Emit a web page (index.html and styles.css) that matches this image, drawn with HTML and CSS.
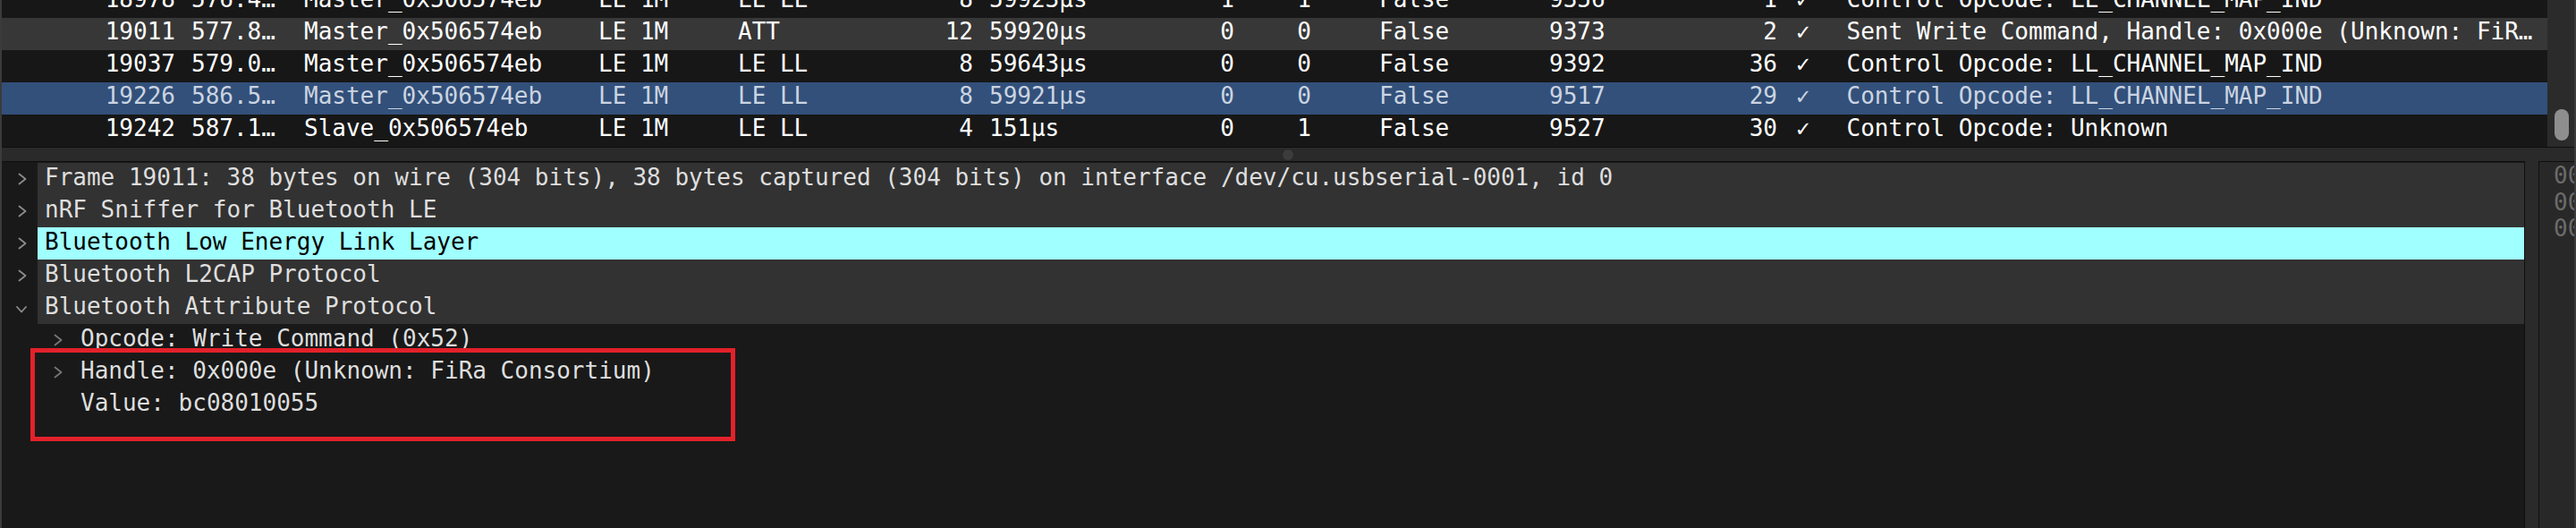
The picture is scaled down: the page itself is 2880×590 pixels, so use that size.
FILE: index.html
```html
<!DOCTYPE html>
<html lang="en">
<head>
<meta charset="utf-8">
<title>Wireshark – Packet 19011</title>
<link rel="stylesheet" href="styles.css">
</head>
<body>
<div class="window">
  <div class="packet-list">
    <div class="rows">
      <div class="rows-inner">
        <div class="row">
          <span class="r">18978</span><span class="c-time">576.4…</span><span>Master_0x506574eb</span><span>LE 1M</span><span>LE LL</span><span class="r">8</span><span class="c-delta">59923µs</span><span class="r">1</span><span class="r">1</span><span class="c-false">False</span><span>9356</span><span class="r">1</span><span class="c-chk">✓</span><span>Control Opcode: LL_CHANNEL_MAP_IND</span>
        </div>
        <div class="row row-marked">
          <span class="r">19011</span><span class="c-time">577.8…</span><span>Master_0x506574eb</span><span>LE 1M</span><span>ATT</span><span class="r">12</span><span class="c-delta">59920µs</span><span class="r">0</span><span class="r">0</span><span class="c-false">False</span><span>9373</span><span class="r">2</span><span class="c-chk">✓</span><span>Sent Write Command, Handle: 0x000e (Unknown: FiR…</span>
        </div>
        <div class="row">
          <span class="r">19037</span><span class="c-time">579.0…</span><span>Master_0x506574eb</span><span>LE 1M</span><span>LE LL</span><span class="r">8</span><span class="c-delta">59643µs</span><span class="r">0</span><span class="r">0</span><span class="c-false">False</span><span>9392</span><span class="r">36</span><span class="c-chk">✓</span><span>Control Opcode: LL_CHANNEL_MAP_IND</span>
        </div>
        <div class="row row-selected">
          <span class="r">19226</span><span class="c-time">586.5…</span><span>Master_0x506574eb</span><span>LE 1M</span><span>LE LL</span><span class="r">8</span><span class="c-delta">59921µs</span><span class="r">0</span><span class="r">0</span><span class="c-false">False</span><span>9517</span><span class="r">29</span><span class="c-chk">✓</span><span>Control Opcode: LL_CHANNEL_MAP_IND</span>
        </div>
        <div class="row">
          <span class="r">19242</span><span class="c-time">587.1…</span><span>Slave_0x506574eb</span><span>LE 1M</span><span>LE LL</span><span class="r">4</span><span class="c-delta">151µs</span><span class="r">0</span><span class="r">1</span><span class="c-false">False</span><span>9527</span><span class="r">30</span><span class="c-chk">✓</span><span>Control Opcode: Unknown</span>
        </div>
      </div>
    </div>
    <div class="vscroll"><div class="thumb"></div></div>
  </div>

  <div class="splitter"><span class="grip"></span></div>

  <div class="bottom">
    <div class="details">
      <div class="node node-top">
        <span class="tog"><svg class="chev" width="10" height="14" viewBox="0 0 10 14"><polyline points="1.5,1.5 8.5,7 1.5,12.5"/></svg></span>
        <span class="lbl">Frame 19011: 38 bytes on wire (304 bits), 38 bytes captured (304 bits) on interface /dev/cu.usbserial-0001, id 0</span>
      </div>
      <div class="node node-top">
        <span class="tog"><svg class="chev" width="10" height="14" viewBox="0 0 10 14"><polyline points="1.5,1.5 8.5,7 1.5,12.5"/></svg></span>
        <span class="lbl">nRF Sniffer for Bluetooth LE</span>
      </div>
      <div class="node node-top node-sel">
        <span class="tog"><svg class="chev" width="10" height="14" viewBox="0 0 10 14"><polyline points="1.5,1.5 8.5,7 1.5,12.5"/></svg></span>
        <span class="lbl">Bluetooth Low Energy Link Layer</span>
      </div>
      <div class="node node-top">
        <span class="tog"><svg class="chev" width="10" height="14" viewBox="0 0 10 14"><polyline points="1.5,1.5 8.5,7 1.5,12.5"/></svg></span>
        <span class="lbl">Bluetooth L2CAP Protocol</span>
      </div>
      <div class="node node-top">
        <span class="tog tog-open"><svg class="chev" width="12" height="8" viewBox="0 0 12 8"><polyline points="1,1 6,6.5 11,1"/></svg></span>
        <span class="lbl">Bluetooth Attribute Protocol</span>
      </div>
      <div class="node node-child">
        <span class="tog"><svg class="chev chev-dim" width="10" height="14" viewBox="0 0 10 14"><polyline points="1.5,1.5 8.5,7 1.5,12.5"/></svg></span>
        <span class="lbl">Opcode: Write Command (0x52)</span>
      </div>
      <div class="node node-child">
        <span class="tog"><svg class="chev chev-dim" width="10" height="14" viewBox="0 0 10 14"><polyline points="1.5,1.5 8.5,7 1.5,12.5"/></svg></span>
        <span class="lbl">Handle: 0x000e (Unknown: FiRa Consortium)</span>
      </div>
      <div class="node node-child">
        <span class="tog"></span>
        <span class="lbl">Value: bc08010055</span>
      </div>
      <div class="annot"></div>
    </div>
    <div class="gap"></div>
    <div class="bytes">
      <div>0000  d6 be 89 8e 06 1b 6d 01</div>
      <div>0010  0e 00 bc 08 01 00 55 00</div>
      <div>0020  00 00 00 00 00 00</div>
    </div>
  </div>
</div>
</body>
</html>
```
FILE: styles.css
```css
html, body {
  margin: 0;
  padding: 0;
  background: #1a1a1a;
}

body {
  font-family: "DejaVu Sans Mono", "Liberation Mono", monospace;
  font-size: 26px;
}

.window {
  width: 2880px;
  height: 590px;
  box-sizing: border-box;
  border-left: 2px solid #3b3b3b;
  border-right: 2px solid #3b3b3b;
  display: flex;
  flex-direction: column;
  overflow: hidden;
}

/* ---------- packet list ---------- */
.packet-list {
  flex: none;
  height: 165px;
  box-sizing: border-box;
  border-bottom: 1px solid #0f0f0f;
  display: flex;
  overflow: hidden;
}

.rows {
  flex: 1;
  background: #171717;
  overflow: hidden;
}

.rows-inner {
  margin-top: -16px;
}

.row {
  display: grid;
  grid-template-columns: 194px 144px 329px 156px 175px 88px 212px 80px 86px 266px 168px 87px 77.5px 1fr;
  height: 36px;
  box-sizing: border-box;
  padding-bottom: 5px;
  line-height: 31px;
  color: #ffffff;
  white-space: nowrap;
}

.row > span {
  overflow: hidden;
}

.row .r { text-align: right; }
.row .c-time { padding-left: 18px; }
.row .c-delta { padding-left: 18px; }
.row .c-false { padding-left: 76px; }
.row .c-chk { padding-left: 21px; }

.row-marked { background: #373737; }

.row-selected {
  background: #32507a;
  color: #cbd4e1;
}

.vscroll {
  flex: none;
  width: 30px;
  background: #2b2b2b;
}

.thumb {
  width: 16px;
  height: 35px;
  margin: 122px 0 0 8px;
  border-radius: 8px;
  background: #8e8e8e;
}

/* ---------- splitter ---------- */
.splitter {
  flex: none;
  height: 15px;
  background: #2a2a2a;
  display: flex;
  align-items: center;
  justify-content: center;
}

.grip {
  width: 12px;
  height: 12px;
  border-radius: 50%;
  background: #3c3c3c;
}

/* ---------- details + bytes ---------- */
.bottom {
  flex: 1;
  display: flex;
  min-height: 0;
}

.details {
  position: relative;
  flex: none;
  width: 2821px;
  box-sizing: border-box;
  border-top: 1px solid #0f0f0f;
  border-right: 1px solid #0f0f0f;
  padding-top: 1px;
  background: #191919;
  overflow: hidden;
}

.node {
  display: flex;
  height: 36px;
  color: #dedede;
  white-space: nowrap;
}

.tog {
  flex: none;
  width: 40px;
  box-sizing: border-box;
  padding-left: 18px;
  display: flex;
  align-items: center;
}

.tog-open {
  padding-left: 16px;
}

.tog-open .chev {
  margin-top: 4px;
}

.chev {
  display: block;
}

.chev polyline {
  fill: none;
  stroke: #8c8c8c;
  stroke-width: 1.8;
  stroke-linecap: round;
  stroke-linejoin: round;
}

.chev-dim polyline {
  stroke: #767676;
}

.lbl {
  flex: 1;
  box-sizing: border-box;
  height: 36px;
  line-height: 33px;
  padding-bottom: 3px;
  overflow: hidden;
}

.node-top .lbl {
  padding-left: 8px;
  background: #323232;
}

.node-sel .lbl {
  background: #a0ffff;
  color: #000000;
}

.node-child .tog {
  width: 88px;
  padding-left: 58px;
}

.annot {
  position: absolute;
  left: 32px;
  top: 208px;
  width: 788px;
  height: 104px;
  box-sizing: border-box;
  border: 5px solid #e3212a;
}

.gap {
  flex: none;
  width: 15px;
  background: #2a2a2a;
}

.bytes {
  flex: 1;
  min-width: 0;
  box-sizing: border-box;
  border-left: 1px solid #0f0f0f;
  border-top: 1px solid #0f0f0f;
  background: #282828;
  color: #6c6c6c;
  padding: 1px 0 0 16px;
  line-height: 29.5px;
  white-space: nowrap;
  overflow: hidden;
}
```
